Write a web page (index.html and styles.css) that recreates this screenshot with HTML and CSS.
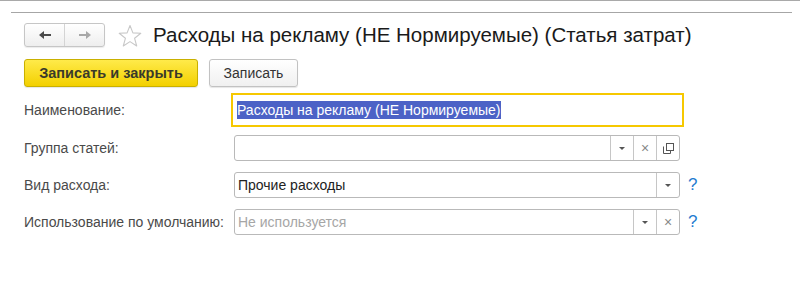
FILE: index.html
```html
<!DOCTYPE html>
<html lang="ru">
<head>
<meta charset="utf-8">
<title>Расходы на рекламу</title>
<link rel="stylesheet" href="styles.css">
</head>
<body>
<div class="top-strip"></div>
<div class="sep"></div>
<div class="header">
  <div class="nav">
    <button class="nav-btn"><svg width="14" height="10" viewBox="0 0 14 10"><path d="M1 5 L6 1 L6 4 L13 4 L13 6 L6 6 L6 9 Z" fill="#4a4a4a"/></svg></button>
    <button class="nav-btn nav-fwd"><svg width="14" height="10" viewBox="0 0 14 10"><path d="M13 5 L8 1 L8 4 L1 4 L1 6 L8 6 L8 9 Z" fill="#a8a8a8"/></svg></button>
  </div>
  <svg class="star" width="26" height="24" viewBox="0 0 26 24"><path d="M13 1.5 L15.9 8.9 L23.8 9.3 L17.6 14.3 L19.7 22 L13 17.6 L6.3 22 L8.4 14.3 L2.2 9.3 L10.1 8.9 Z" fill="none" stroke="#c8c8c8" stroke-width="1.1" stroke-linejoin="round"/></svg>
  <h1 class="title">Расходы на рекламу (НЕ Нормируемые) (Статья затрат)</h1>
</div>
<div class="actions">
  <button class="btn btn-primary">Записать и закрыть</button>
  <button class="btn">Записать</button>
</div>
<div class="form">
  <div class="row row-name">
    <label class="label">Наименование:</label>
    <div class="field-focus"><span class="sel">Расходы на рекламу (НЕ Нормируемые)</span></div>
  </div>
  <div class="row">
    <label class="label">Группа статей:</label>
    <div class="field">
      <span class="value"></span>
      <span class="fbtn"><i class="tri"></i></span>
      <span class="fbtn xbtn">×</span>
      <span class="fbtn"><svg width="11" height="11" viewBox="0 0 11 11"><rect x="3.5" y="0.5" width="7" height="7" fill="none" stroke="#555"/><path d="M0.5 3.5 V10.5 H7.5 V8" fill="none" stroke="#555"/></svg></span>
    </div>
  </div>
  <div class="row">
    <label class="label">Вид расхода:</label>
    <div class="field">
      <span class="value">Прочие расходы</span>
      <span class="fbtn"><i class="tri"></i></span>
    </div>
    <span class="help">?</span>
  </div>
  <div class="row">
    <label class="label">Использование по умолчанию:</label>
    <div class="field">
      <span class="value placeholder">Не используется</span>
      <span class="fbtn"><i class="tri"></i></span>
      <span class="fbtn xbtn">×</span>
    </div>
    <span class="help">?</span>
  </div>
</div>
</body>
</html>
```
FILE: styles.css
```css
* { box-sizing: border-box; }
html, body { margin: 0; padding: 0; background: #fff; }
body {
  font-family: "Liberation Sans", Arial, sans-serif;
  color: #333;
  width: 800px;
  height: 291px;
  overflow: hidden;
}
.top-strip {
  height: 12px;
  border-top: 1px solid #a9a9a9;
}
.sep {
  margin: 0 8px 0 11px;
  border-top: 1px solid #a6a6a6;
}
.header {
  display: flex;
  align-items: center;
  padding: 9px 0 0 24px;
  height: 35px;
}
.nav {
  display: flex;
  width: 81px;
  height: 24px;
  border: 1px solid #c6c6c6;
  border-radius: 3px;
  background: linear-gradient(#ffffff, #eeeeee);
  box-shadow: 0 1px 1px rgba(0,0,0,0.08);
}
.nav-btn {
  flex: 1;
  border: 0;
  background: transparent;
  padding: 0;
  display: flex;
  align-items: center;
  justify-content: center;
}
.nav-fwd { border-left: 1px solid #d4d4d4; }
.star { margin-left: 12px; margin-top: 1px; }
.title {
  margin: 0 0 0 10px;
  font-weight: normal;
  font-size: 20.5px;
  color: #1a1a1a;
}
.actions {
  display: flex;
  gap: 11px;
  padding: 11px 0 0 24px;
}
.btn {
  height: 28px;
  padding: 0;
  font-family: "Liberation Sans", Arial, sans-serif;
  font-size: 14px;
  color: #333;
  border: 1px solid #c2c2c2;
  border-radius: 3px;
  background: linear-gradient(#ffffff, #f0f0f0);
  box-shadow: 0 1px 1px rgba(0,0,0,0.1);
  width: 89px;
}
.btn-primary {
  width: 174px;
  font-weight: bold;
  font-size: 14.5px;
  color: #3a3a2a;
  border-color: #c9b000;
  background: linear-gradient(#ffea4a, #f3d000);
}
.form {
  padding: 6px 0 0 24px;
}
.row {
  display: flex;
  align-items: center;
  height: 26px;
  margin-bottom: 11px;
}
.row-name {
  height: 34px;
  margin-bottom: 8px;
}
.label {
  width: 210px;
  font-size: 14px;
  color: #4a4a4a;
  flex-shrink: 0;
  white-space: nowrap;
}
.field-focus {
  margin-left: -3px;
  width: 453px;
  height: 34px;
  border: 2px solid #f6c800;
  padding-left: 4px;
  display: flex;
  align-items: center;
  font-size: 14px;
}
.sel {
  background: #4c62c6;
  color: #fff;
  padding: 1px 0;
}
.field {
  width: 446px;
  height: 26px;
  border: 1px solid #b9b9b9;
  border-radius: 3px;
  display: flex;
  align-items: stretch;
  font-size: 14px;
  background: #fff;
}
.value {
  flex: 1;
  display: flex;
  align-items: center;
  padding-left: 3px;
  color: #222;
}
.placeholder { color: #a6a6a6; }
.fbtn {
  width: 23px;
  border-left: 1px solid #c6c6c6;
  display: flex;
  align-items: center;
  justify-content: center;
  color: #777;
  font-size: 13px;
}
.tri {
  width: 0;
  height: 0;
  border-left: 3px solid transparent;
  border-right: 3px solid transparent;
  border-top: 3px solid #555;
}
.xbtn { color: #888; font-size: 14px; }
.help {
  margin-left: 8px;
  color: #1f7cd0;
  font-size: 17px;
}
```
